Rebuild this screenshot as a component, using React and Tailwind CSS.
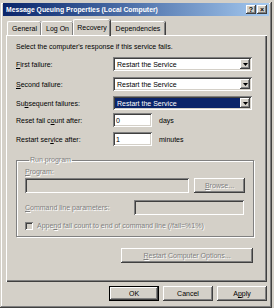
import React from "react";

const raised =
  "shadow-[inset_-1px_-1px_#404040,inset_1px_1px_#fff,inset_-2px_-2px_#808080,inset_2px_2px_#d4d0c8]";
const sunken =
  "shadow-[inset_1px_1px_#808080,inset_-1px_-1px_#fff,inset_2px_2px_#404040,inset_-2px_-2px_#d4d0c8]";
const dim = "text-[#808080] [text-shadow:1px_1px_0_#fff]";

function U({ children }) {
  return <span className="underline underline-offset-[1px]">{children}</span>;
}

function Arrow() {
  return (
    <svg width="5" height="3" viewBox="0 0 5 3">
      <path d="M0 0h5L2.5 3z" fill="#000" />
    </svg>
  );
}

function Dropdown({ active }) {
  return (
    <div className={`flex h-[14px] w-[139px] items-stretch bg-white p-[2px] ${sunken}`}>
      <div
        className={`flex flex-1 items-center pl-[2px] ${
          active ? "bg-[#0a246a] text-white" : ""
        }`}
      >
        Restart the Service
      </div>
      <div className={`flex w-[10px] items-center justify-center bg-[#d4d0c8] ${raised}`}>
        <Arrow />
      </div>
    </div>
  );
}

function Row({ label, children }) {
  return (
    <div className="flex h-[14px] items-center">
      <span className="w-[97px]">{label}</span>
      {children}
    </div>
  );
}

function Tab({ children, active, w }) {
  return (
    <div
      className={`flex items-center justify-center rounded-t-[2px] border-t border-l border-white ${w} ${
        active
          ? "relative z-10 -mb-px h-[17px] pb-[2px] shadow-[inset_-1px_0_#808080,1px_0_#404040]"
          : "h-[14px] shadow-[inset_-1px_0_#808080,1px_0_#404040]"
      }`}
    >
      {children}
    </div>
  );
}

function Button({ children, def, disabled, w = "w-[50px]" }) {
  return (
    <div
      className={`flex h-[15px] items-center justify-center ${w} ${
        def
          ? "shadow-[inset_0_0_0_1px_#000,inset_-2px_-2px_#404040,inset_2px_2px_#fff,inset_-3px_-3px_#808080]"
          : raised
      } ${disabled ? dim : ""}`}
    >
      {children}
    </div>
  );
}

export default function App() {
  return (
    <div className="h-[308px] w-[274px] overflow-hidden bg-[#d4d0c8] font-['Liberation_Sans',Arial,sans-serif] text-[7px] leading-[9px] text-black">
      <div className="h-[2px]" />
      <div className="flex h-[306px] w-[272px] flex-col shadow-[inset_-1px_-1px_#404040,inset_1px_1px_#d4d0c8,inset_-2px_-2px_#808080,inset_2px_2px_#fff]">
        {/* title bar */}
        <div className="mx-[3px] mt-px flex h-[13px] items-center justify-between bg-linear-to-r from-[#0a246a] to-[#a6caf0] pl-[3px] pr-[2px]">
          <span className="text-[6.8px] font-bold text-white">
            Message Queuing Properties (Local Computer)
          </span>
          <div className="flex gap-[1px]">
            <div className={`flex h-[9px] w-[10px] items-center justify-center bg-[#d4d0c8] text-[7px] font-bold ${raised}`}>
              ?
            </div>
            <div className={`flex h-[9px] w-[10px] items-center justify-center bg-[#d4d0c8] text-[7px] font-bold ${raised}`}>
              ×
            </div>
          </div>
        </div>

        {/* tabs */}
        <div className="ml-[7px] mt-[3px] flex h-[16px] items-end">
          <Tab w="w-[34px]">General</Tab>
          <Tab w="w-[32px]">Log On</Tab>
          <Tab w="w-[37px]" active>
            Recovery
          </Tab>
          <Tab w="w-[55px]">Dependencies</Tab>
        </div>

        {/* panel */}
        <div className="ml-[6px] flex h-[247px] w-[261px] flex-col pl-[10px] pt-[7px] shadow-[inset_1px_1px_#fff,inset_-1px_-1px_#404040,inset_-2px_-2px_#808080]">
          <div className="h-[10px] leading-[10px]">
            Select the computer's response if this service fails.
          </div>
          <div className="mt-[5px]">
            <Row label={<><U>F</U>irst failure:</>}>
              <Dropdown />
            </Row>
          </div>
          <div className="mt-[6px]">
            <Row label={<><U>S</U>econd failure:</>}>
              <Dropdown />
            </Row>
          </div>
          <div className="mt-[5px]">
            <Row label={<>Su<U>b</U>sequent failures:</>}>
              <Dropdown active />
            </Row>
          </div>
          <div className="mt-[3px]">
            <Row label={<>Reset fail c<U>o</U>unt after:</>}>
              <div className={`flex h-[14px] w-[39px] items-center bg-white pl-[3px] ${sunken}`}>0</div>
              <span className="ml-[7px]">days</span>
            </Row>
          </div>
          <div className="mt-[5px]">
            <Row label={<>Restart ser<U>v</U>ice after:</>}>
              <div className={`flex h-[14px] w-[39px] items-center bg-white pl-[3px] ${sunken}`}>1</div>
              <span className="ml-[7px]">minutes</span>
            </Row>
          </div>

          {/* run program */}
          <fieldset className="mt-[9px] h-[82px] w-[238px] border border-[#808080] pl-[8px] shadow-[1px_1px_#fff,inset_1px_1px_#fff]">
            <legend className={`ml-[4px] px-[1px] leading-[10px] ${dim}`}>Run program</legend>
            <div className={`mt-[2px] leading-[10px] ${dim}`}>
              <U>P</U>rogram:
            </div>
            <div className="mt-[1px] flex h-[15px] items-center">
              <div className={`h-[15px] w-[164px] ${sunken}`} />
              <div className="ml-[5px]">
                <Button disabled w="w-[51px]">
                  <span>
                    <U>B</U>rowse...
                  </span>
                </Button>
              </div>
            </div>
            <div className="mt-[7px] flex h-[15px] items-center">
              <span className={`w-[109px] ${dim}`}>
                <U>C</U>ommand line parameters:
              </span>
              <div className={`h-[15px] w-[110px] ${sunken}`} />
            </div>
            <div className="mt-[6px] flex h-[9px] items-center">
              <div className={`h-[8px] w-[8px] ${sunken}`} />
              <span className={`ml-[4px] ${dim}`}>
                Appe<U>n</U>d fail count to end of command line (/fail=%1%)
              </span>
            </div>
          </fieldset>

          <div className="ml-[105px] mt-[11px]">
            <Button disabled w="w-[132px]">
              <span>
                <U>R</U>estart Computer Options...
              </span>
            </Button>
          </div>
        </div>

        {/* dialog buttons */}
        <div className="mr-[5px] mt-[4px] flex justify-end gap-[4px]">
          <Button def>OK</Button>
          <Button>Cancel</Button>
          <Button>
            <span>
              A<U>p</U>ply
            </span>
          </Button>
        </div>
      </div>
    </div>
  );
}
